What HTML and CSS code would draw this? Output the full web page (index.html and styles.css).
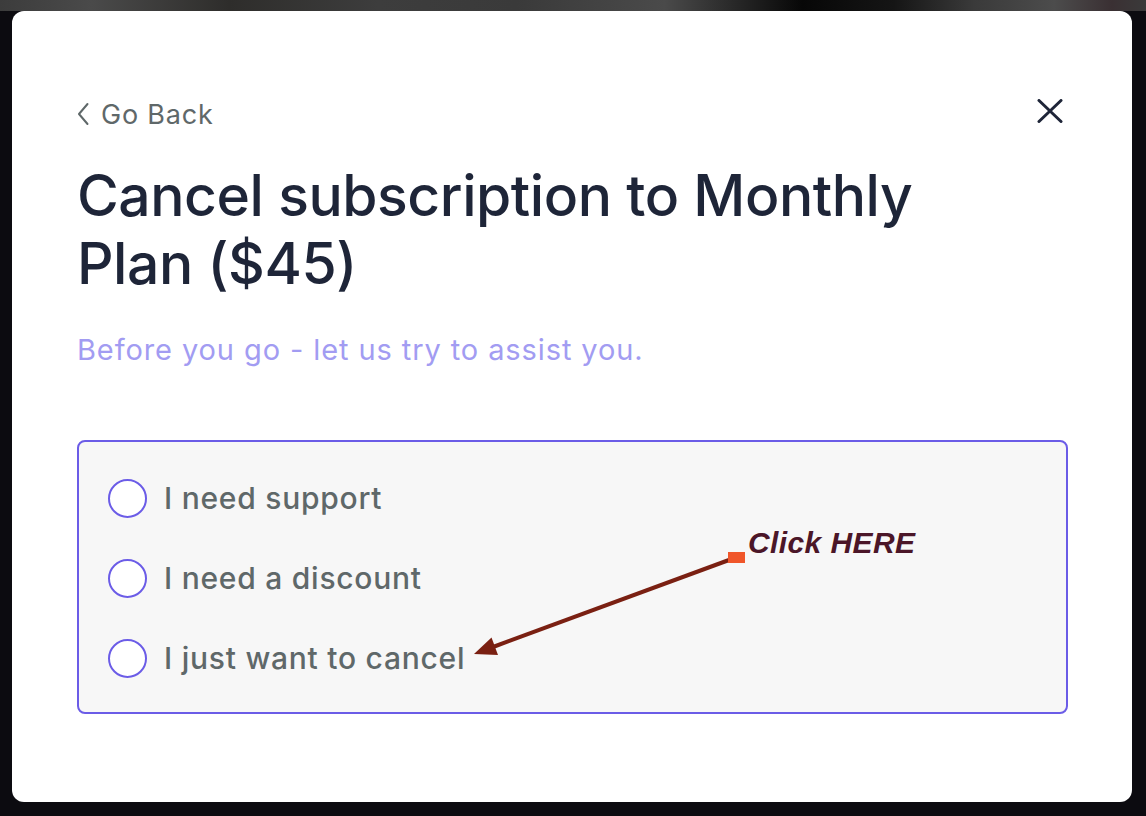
FILE: index.html
```html
<!DOCTYPE html>
<html lang="en">
<head>
<meta charset="utf-8">
<title>Cancel subscription</title>
<link rel="stylesheet" href="styles.css">
</head>
<body>
<div class="backdrop">
  <div class="modal">
    <div class="top-row">
      <a class="go-back" href="#">
        <svg class="chev" width="12" height="24" viewBox="0 0 12 24"><path d="M10.5 2 L2 12 L10.5 22" fill="none" stroke="#5f6869" stroke-width="2" stroke-linecap="round" stroke-linejoin="round"/></svg>
        <span>Go Back</span>
      </a>
      <button class="close" aria-label="Close">
        <svg width="26" height="24" viewBox="0 0 26 24"><path d="M2 1.5 L24 22.5 M24 1.5 L2 22.5" stroke="#1e2538" stroke-width="3" stroke-linecap="round"/></svg>
      </button>
    </div>
    <h1 class="title">Cancel subscription to Monthly<br>Plan ($45)</h1>
    <p class="subtitle">Before you go - let us try to assist you.</p>
    <div class="options">
      <label class="option"><span class="radio"></span><span class="opt-text">I need support</span></label>
      <label class="option"><span class="radio"></span><span class="opt-text">I need a discount</span></label>
      <label class="option"><span class="radio"></span><span class="opt-text">I just want to cancel</span></label>
      <div class="annotation">
        <span class="click-here">Click HERE</span>
        <svg class="arrow" width="990" height="272" viewBox="0 0 990 272">
          <line x1="650" y1="118" x2="414" y2="205" stroke="#7a2012" stroke-width="4"/>
          <polygon points="395,212 412.5,195.5 419,213" fill="#7a2012"/>
          <rect x="649" y="110" width="17" height="11" fill="#f0562a"/>
        </svg>
      </div>
    </div>
  </div>
</div>
</body>
</html>
```
FILE: styles.css
```css
html, body {
  margin: 0;
  padding: 0;
}
body {
  background: #0c0b10;
  font-family: "Inter", "Noto Sans", sans-serif;
}
.backdrop {
  width: 1146px;
  height: 816px;
  box-sizing: border-box;
  padding: 11px 14px 14px 12px;
  background:
    linear-gradient(to right, #3c3c3c 0%, #4a4a4a 8%, #2e2d2b 20%, #3d3d3d 33%, #3a3a3a 45%, #4a4a4a 58%, #070707 70%, #151515 78%, #3a3a3a 85%, #4c4c4c 92%, #3a3033 97%, #3a3a3a 100%) top / 100% 11px no-repeat,
    #0c0b10;
}
.modal {
  background: #ffffff;
  border-radius: 12px;
  height: 791px;
  box-sizing: border-box;
  padding: 85px 64px 0 65px;
  position: relative;
}
.top-row {
  display: flex;
  justify-content: space-between;
  align-items: center;
  height: 36px;
}
.go-back {
  display: flex;
  align-items: center;
  gap: 12px;
  text-decoration: none;
  color: #5f6869;
  font-size: 27px;
  letter-spacing: 0.8px;
}
.chev { display: block; }
.close {
  background: none;
  border: 0;
  padding: 0;
  margin: 0 5px 6px 0;
  display: flex;
}
.title {
  margin: 30px 0 0;
  font-size: 57px;
  line-height: 68px;
  font-weight: 500;
  color: #1e2538;
  letter-spacing: -0.45px;
}
.subtitle {
  margin: 34px 0 0;
  font-size: 29px;
  line-height: 36px;
  color: #a29cf2;
  letter-spacing: 0.9px;
}
.options {
  position: relative;
  margin-top: 72px;
  border: 2px solid #6b5ce7;
  border-radius: 8px;
  background: #f7f7f7;
  padding: 36px 29px 34px 29px;
  display: flex;
  flex-direction: column;
  gap: 40px;
}
.option {
  display: flex;
  align-items: center;
  gap: 17px;
  height: 40px;
}
.radio {
  width: 35px;
  height: 35px;
  border: 2px solid #6b5ce7;
  border-radius: 50%;
  background: #ffffff;
  flex: none;
}
.opt-text {
  font-size: 30px;
  font-weight: 500;
  color: #5f6869;
  letter-spacing: 0.75px;
}
.annotation {
  position: absolute;
  left: 0;
  top: 0;
  width: 100%;
  height: 100%;
  pointer-events: none;
}
.click-here {
  position: absolute;
  left: 669px;
  top: 86px;
  line-height: 30px;
  font-family: "Liberation Sans", Arial, sans-serif;
  font-weight: bold;
  font-style: italic;
  font-size: 30px;
  letter-spacing: 0.4px;
  color: #4b1628;
}
.arrow {
  position: absolute;
  left: 0;
  top: 0;
}
```
